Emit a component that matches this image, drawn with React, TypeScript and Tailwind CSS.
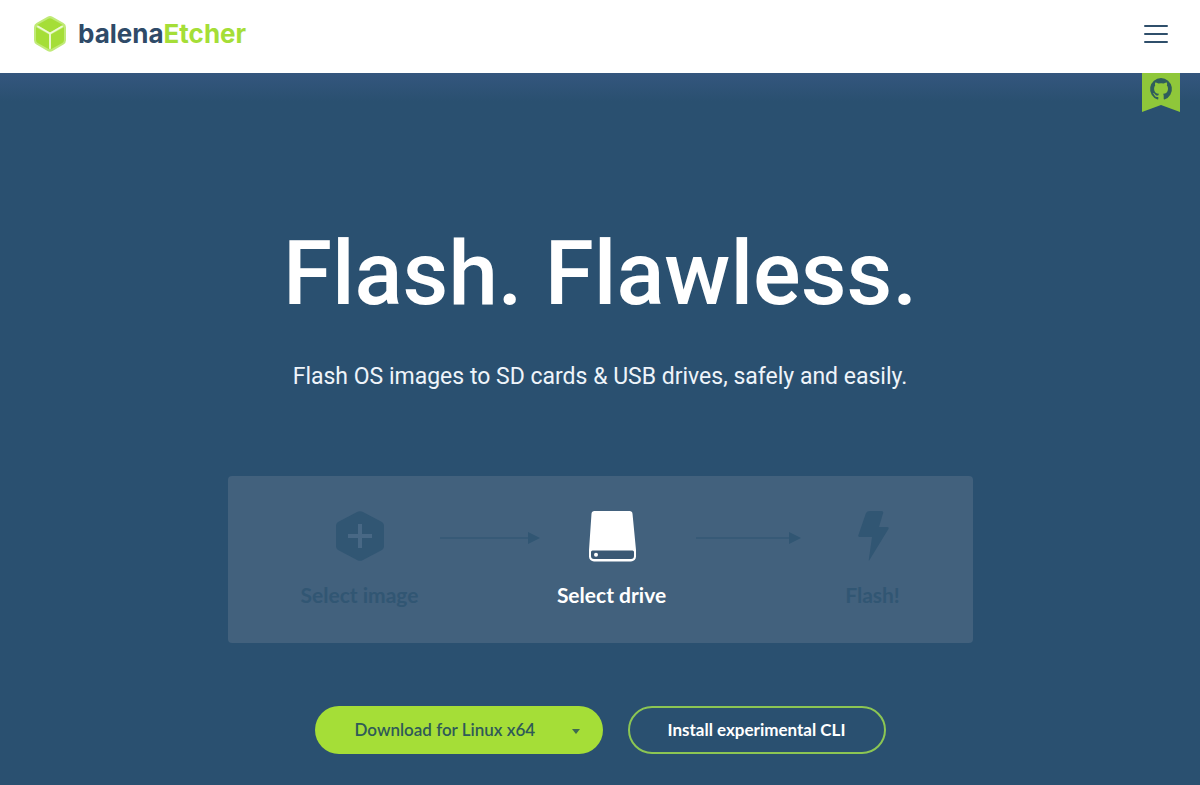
import React from "react";

function CubeLogo() {
  return (
    <svg viewBox="0 0 36 38" className="h-[38px] w-9" aria-hidden="true">
      <path d="M15.5 1.7a5 5 0 0 1 5 0l11 6.3a5 5 0 0 1 2.500 4.300v13a5 5 0 0 1-2.500 4.300l-11 6.500a5 5 0 0 1-5 0l-11-6.500A5 5 0 0 1 2 25.300V12.300A5 5 0 0 1 4.500 8z" fill="#c0ea78" />
      <path d="M16.300 3.700a3.500 3.500 0 0 1 3.400 0L31 10 18 17.400 5 10z" fill="#a5de37" />
      <path d="M4 12.200l13 7.400v14.600L5.700 28A3.500 3.500 0 0 1 4 25z" fill="#a5de37" />
      <path d="M32 12.200l-13 7.400v14.600L30.300 28A3.500 3.500 0 0 0 32 25z" fill="#a5de37" />
      <path d="M6 11.500l12 7 12-7M18 18.500V33" fill="none" stroke="#eefad6" strokeWidth="1.800" strokeLinecap="round" />
    </svg>
  );
}

function MenuIcon() {
  return (
    <svg viewBox="0 0 24 20" className="h-5 w-6" fill="none" stroke="#2f4f6b" strokeWidth="2" aria-hidden="true">
      <path d="M1 2h22M1 10h22M1 18h22" strokeLinecap="round" />
    </svg>
  );
}

function GithubRibbon() {
  return (
    <svg viewBox="0 0 38 39" className="h-[39px] w-[38px]" aria-hidden="true">
      <path d="M0 0h38v39L19 32 0 39z" fill="#8fc73a" />
      <g transform="translate(8 5)" fill="#2f5d5c">
        <path d="M11 0A11 11 0 0 0 7.500 21.400c.6.1.8-.2.800-.5v-2c-3.100.7-3.700-1.300-3.700-1.300-.5-1.300-1.200-1.600-1.200-1.600-1-.7.100-.7.100-.7 1.100.1 1.700 1.100 1.700 1.100 1 1.700 2.600 1.200 3.200.9.100-.7.400-1.200.7-1.500-2.400-.3-5-1.200-5-5.400 0-1.200.4-2.200 1.100-3-.1-.2-.5-1.400.1-2.900 0 0 .9-.3 3 1.100a10.500 10.500 0 0 1 5.500 0c2.100-1.400 3-1.100 3-1.100.6 1.500.2 2.700.1 2.900.7.800 1.100 1.800 1.100 3 0 4.200-2.600 5.100-5 5.400.4.300.7 1 .7 2v3.100c0 .3.200.6.800.5A11 11 0 0 0 11 0z" />
      </g>
    </svg>
  );
}

function HexPlusIcon() {
  return (
    <svg viewBox="0 0 48 50" className="h-[50px] w-12" aria-hidden="true">
      <path d="M21 1a6 6 0 0 1 6 0l18 9.500a5 5 0 0 1 3 4.500v20a5 5 0 0 1-3 4.500L27 49a6 6 0 0 1-6 0L3 39.500A5 5 0 0 1 0 35V15a5 5 0 0 1 3-4.500z" fill="#315673" />
      <path d="M24 13v24M12 25h24" stroke="#486885" strokeWidth="4" />
    </svg>
  );
}

function DriveIcon() {
  return (
    <svg viewBox="0 0 48 52" className="h-[52px] w-12" aria-hidden="true">
      <path d="M6.500 1h35a3 3 0 0 1 3 2.700L48 40v6.500a5 5 0 0 1-5 5H6a5 5 0 0 1-5-5V40L3.500 3.700A3 3 0 0 1 6.500 1z" fill="#fff" />
      <path d="M4.500 40.500h40a1.500 1.500 0 0 1 1.500 1.500v4a3 3 0 0 1-3 3H6a3 3 0 0 1-3-3v-4a1.500 1.500 0 0 1 1.500-1.500z" fill="#3a5874" />
      <circle cx="8" cy="44.700" r="2" fill="#fff" />
    </svg>
  );
}

function BoltIcon() {
  return (
    <svg viewBox="0 0 34 50" className="h-[50px] w-[34px]" aria-hidden="true">
      <path d="M10 2Q11 0 14 0h11q3 0 2 2.500L23 16h8q2.500 0 1.300 2.300L13.500 49q-1 1.300-.7-.5L16 26H4q-2.500 0-1.500-2.300z" fill="#315673" />
    </svg>
  );
}

function Arrow() {
  return (
    <div className="flex h-[52px] items-center pt-1" aria-hidden="true">
      <div className="h-0.5 flex-1 bg-[#375a77]" />
      <svg viewBox="0 0 12 12" className="h-3 w-3">
        <path d="M0 0l12 6L0 12z" fill="#315673" />
      </svg>
    </div>
  );
}

function Step({ icon, label, active = false }: { icon: React.ReactNode; label: string; active?: boolean }) {
  return (
    <div className="flex flex-col items-center gap-[19px]">
      <div className="flex h-[52px] items-center">{icon}</div>
      <div className={`text-[21px] leading-7 font-bold whitespace-nowrap ${active ? "text-white" : "text-[#315673]"}`}>
        {label}
      </div>
    </div>
  );
}

export default function App() {
  return (
    <div className="flex min-h-screen flex-col bg-[#2a5070] font-['Lato',sans-serif]">
      <header className="flex h-[73px] items-center justify-between bg-white px-8 pb-1.5">
        <a href="#home" className="flex items-center gap-[10px]">
          <CubeLogo />
          <span className="font-['Inter',sans-serif] text-[26px] leading-8 font-bold text-[#2f4a68]">
            balena<span className="text-[#a5de37]">Etcher</span>
          </span>
        </a>
        <button type="button" aria-label="Menu">
          <MenuIcon />
        </button>
      </header>

      <main className="relative flex flex-1 flex-col items-center bg-linear-to-b from-[#34567e] to-[#2a5070] to-[28px]">
        <a href="#github" aria-label="GitHub" className="absolute top-0 right-5">
          <GithubRibbon />
        </a>

        <h1 className="mt-[146px] font-['Roboto',sans-serif] text-[89px] leading-[110px] font-medium text-white">
          Flash. Flawless.
        </h1>
        <p className="mt-8 font-['Roboto',sans-serif] text-[23px] leading-8 text-[#eef4fa]">
          Flash OS images to SD cards &amp; USB drives, safely and easily.
        </p>

        <section className="mt-[83px] grid w-full max-w-[745px] grid-cols-[144px_108fr_144px_117fr_144px] rounded-sm bg-[#42617d] pt-[34px] pr-7 pb-[34px] pl-[60px]">
          <Step icon={<HexPlusIcon />} label="Select image" />
          <div className="pl-2"><Arrow /></div>
          <Step icon={<DriveIcon />} label="Select drive" active />
          <div className="pl-3"><Arrow /></div>
          <Step icon={<BoltIcon />} label="Flash!" />
        </section>

        <div className="mt-[63px] mb-[31px] flex gap-[25px]">
          <button type="button" className="flex h-12 w-72 items-center justify-between rounded-full bg-[#a5de37] pr-[22px] pl-10 text-[17px] font-semibold text-[#2f5a58]">
            Download for Linux x64
            <svg viewBox="0 0 10 6" className="mt-1 h-1.5 w-2.5" aria-hidden="true">
              <path d="M1 0h8L5 5z" fill="#3f6b50" />
            </svg>
          </button>
          <button type="button" className="h-12 w-[258px] rounded-full border-2 border-[#8cc653] text-[17px] font-bold text-white">
            Install experimental CLI
          </button>
        </div>
      </main>
    </div>
  );
}
